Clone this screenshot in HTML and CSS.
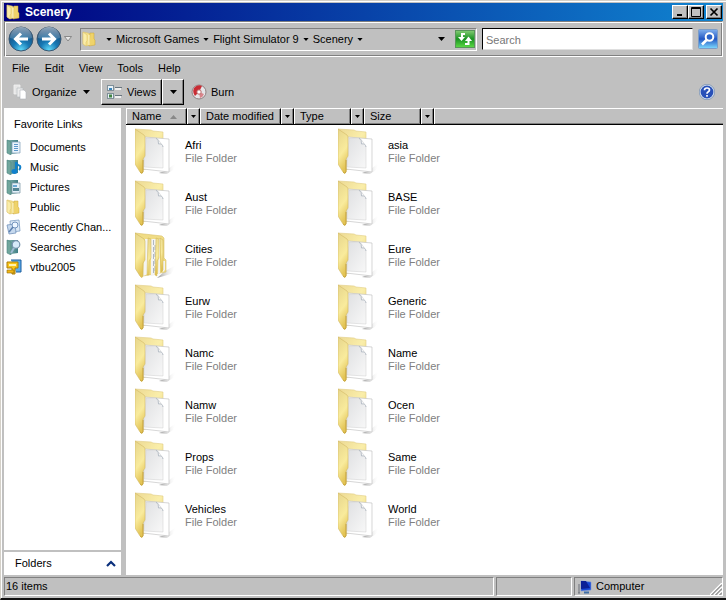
FILE: index.html
```html
<!DOCTYPE html>
<html lang="en">
<head>
    <meta charset="UTF-8">
    <meta name="viewport" content="width=device-width, initial-scale=1.0">
    <title>Scenery</title>
    <link rel="stylesheet" href="styles.css">
</head>
<body>
    <!-- shared icons -->
    <svg class="defs" aria-hidden="true">
        <defs>
            <linearGradient id="gold" x1="0" y1="0" x2="1" y2="1">
                <stop offset="0" stop-color="#ecd992"/>
                <stop offset="0.5" stop-color="#faeeaa"/>
                <stop offset="1" stop-color="#e6ca6c"/>
            </linearGradient>
            <linearGradient id="flap" x1="0" y1="0" x2="0.3" y2="1">
                <stop offset="0" stop-color="#e6d58c"/>
                <stop offset="0.6" stop-color="#f9eb9c"/>
                <stop offset="1" stop-color="#e3c455"/>
            </linearGradient>
            <linearGradient id="paper" x1="0" y1="0" x2="1" y2="1">
                <stop offset="0" stop-color="#dfe0e2"/>
                <stop offset="1" stop-color="#f8f8f8"/>
            </linearGradient>
            <linearGradient id="shade" x1="0" y1="0" x2="1" y2="0">
                <stop offset="0" stop-color="#909090"/>
                <stop offset="1" stop-color="#ffffff" stop-opacity="0"/>
            </linearGradient>
            <linearGradient id="teal" x1="0" y1="0" x2="1" y2="0">
                <stop offset="0" stop-color="#8cb8b0"/>
                <stop offset="1" stop-color="#3f7f85"/>
            </linearGradient>
            <radialGradient id="orb" cx="0.5" cy="0.95" r="0.8">
                <stop offset="0" stop-color="#5fd8f8"/>
                <stop offset="0.45" stop-color="#1779b5"/>
                <stop offset="1" stop-color="#174a78"/>
            </radialGradient>
            <linearGradient id="gloss" x1="0" y1="0" x2="0" y2="1">
                <stop offset="0" stop-color="#ffffff" stop-opacity="0.85"/>
                <stop offset="1" stop-color="#ffffff" stop-opacity="0.2"/>
            </linearGradient>
            <linearGradient id="blue" x1="0" y1="0" x2="0" y2="1">
                <stop offset="0" stop-color="#7fb0ee"/>
                <stop offset="0.5" stop-color="#2357c4"/>
                <stop offset="1" stop-color="#7fdcff"/>
            </linearGradient>
            <linearGradient id="green" x1="0" y1="0" x2="0" y2="1">
                <stop offset="0" stop-color="#85cc75"/>
                <stop offset="0.5" stop-color="#199322"/>
                <stop offset="1" stop-color="#5ddb45"/>
            </linearGradient>
        </defs>
        <symbol id="folder" viewBox="0 0 42 50">
            <path d="M30 44 L41 36 L38 43 L32 47 L24 46Z" fill="url(#shade)"/>
            <path d="M0 2 L16 3 L18 4 L28 5 V36 L8 43Z" fill="url(#gold)" stroke="#e0cd84" stroke-width="0.6"/>
            <path d="M10 10 L34 12 V45 L8 42Z" fill="#fff" stroke="#c4c4c4" stroke-width="0.7"/>
            <path d="M11 11 L22 11 L28 19 V41 L9 40Z" fill="url(#paper)" stroke="#cfcfcf" stroke-width="0.5"/>
            <path d="M21 11 Q24 13 23.500 17 Q27 16 28 20" fill="#fff" stroke="#a9b2bd" stroke-width="0.8"/>
            <path d="M0 2 L9 8 Q10 9 10 11 V29 L8 32 V45 Q7 48 5 45 L0 37Z" fill="url(#flap)" stroke="#d3bb66" stroke-width="0.6"/>
            <path d="M8 33 V45 Q7 47 5 45" fill="none" stroke="#c19d31" stroke-width="0.8"/>
        </symbol>
        <symbol id="folder-full" viewBox="0 0 42 50">
            <path d="M30 40 L41 34 L36 43 L22 47Z" fill="url(#shade)"/>
            <path d="M0 2 L27 5 L29 7 V27 L31 29 V41 L8 45Z" fill="#f0dc85" stroke="#d9c16c" stroke-width="0.6"/>
            <path d="M10 8 L13 8 V43 L8 45Z M16 8 L21 8 V44 L16 45Z M24 8 L25 8 V42 L23 44Z M28 30 L30 30 V39 L28 41Z" fill="#f4f4f2"/>
            <path d="M18.500 9 V42 M20 14 V42" stroke="#a7b0bd" stroke-width="0.9" stroke-dasharray="5 2"/>
            <path d="M13 7 L16 8 V27 L14 30 V44 L12 44Z M21 7 L24 8 V27 L22 30 V45 L20 44Z M25 7 L28 9 V39 L26 41Z" fill="url(#flap)" stroke="#cdb253" stroke-width="0.5"/>
            <path d="M0 2 L9 8 L10 10 V29 L8 32 V45 Q7 48 5 45 L0 37Z" fill="url(#flap)" stroke="#cfb55a" stroke-width="0.6"/>
        </symbol>
        <symbol id="folder-small" viewBox="0 0 16 16">
            <path d="M1 1 L6 2 L8 3 V14 L4 15 L1 13Z" fill="#f3df88" stroke="#d8bf66" stroke-width="0.5"/>
            <path d="M8 2 L12 2 V8 L13 9 V14 L7 15Z" fill="#efd36a" stroke="#cba73b" stroke-width="0.5"/>
            <path d="M1 1 L5 4 V10 L4 11 V15 L1 13Z" fill="#faeda8" stroke="#d8bf66" stroke-width="0.5"/>
            <path d="M7 4 V14" stroke="#fff8d0" stroke-width="1"/>
        </symbol>
        <symbol id="book" viewBox="0 0 16 16">
            <path d="M1 1 L12 1 V14 L5 15Z" fill="url(#teal)"/>
            <path d="M1 1 L5 3 V16 L1 14Z" fill="#70a69c" stroke="#4b8580" stroke-width="0.6"/>
        </symbol>
        <symbol id="documents" viewBox="0 0 16 16">
            <use href="#book"/>
            <path d="M6 3 H14 V14 H6Z" fill="#eaf4fc" stroke="#7c9bb5" stroke-width="0.7"/>
            <path d="M8 5.500 H12 M8 7.500 H12 M8 9.500 H12 M8 11.500 H12" stroke="#4d8dc4" stroke-width="0.9"/>
        </symbol>
        <symbol id="music" viewBox="0 0 16 16">
            <use href="#book"/>
            <path d="M10 13 V3 Q11 6 14 7 Q15 9 13 11" fill="none" stroke="#1180cc" stroke-width="2"/>
            <ellipse cx="8.5" cy="12.5" rx="3" ry="2.4" fill="#1180cc"/>
        </symbol>
        <symbol id="pictures" viewBox="0 0 16 16">
            <use href="#book"/>
            <path d="M6 4 H14 V14 H6Z" fill="#e4f1fa" stroke="#738f9f" stroke-width="0.7"/>
            <path d="M7 6 H11 V8 H7Z" fill="#6aa9d5"/>
            <path d="M7 9 H13 V12 H7Z" fill="#538594"/>
        </symbol>
        <symbol id="recent" viewBox="0 0 16 16">
            <path d="M4 2 L13 1 L14 12 L5 13Z" fill="#dce9f6" stroke="#7f9fc4" stroke-width="0.8"/>
            <path d="M1 6 L9 5 L10 14 L3 15Z" fill="#c6d9ee" stroke="#7292ba" stroke-width="0.8"/>
            <circle cx="9" cy="6" r="3" fill="#edf6ff" stroke="#7394bd"/>
            <path d="M7 8 L3 13" stroke="#5c7fae" stroke-width="1.5"/>
        </symbol>
        <symbol id="searches" viewBox="0 0 16 16">
            <use href="#book"/>
            <circle cx="10" cy="5.5" r="3.8" fill="#d6eaf9" stroke="#7491aa" stroke-width="1.2"/>
            <path d="M8 9 L5 14" stroke="#9dbbd3" stroke-width="2"/>
        </symbol>
        <symbol id="zip" viewBox="0 0 16 16">
            <path d="M5 1 H15 V13 H10" fill="#5aaef0" stroke="#1c5c9c"/>
            <path d="M1 3 H12 V9 H9 V15 H6 V9 H1Z" fill="#f8c61b" stroke="#ad7d08"/>
            <path d="M3 5 H10 V7 H3Z" fill="#fff3b0"/>
            <path d="M1 11 H8 V14 H1Z" fill="#f2b713" stroke="#8c6a10" stroke-width="0.6"/>
        </symbol>
        <symbol id="arrow" viewBox="0 0 7 4">
            <path d="M0 0 H7 L3.500 4Z" fill="currentColor"/>
        </symbol>
    </svg>

    <div class="window">
        <header class="title-bar">
            <svg class="icon"><use href="#folder-small"/></svg>
            <h1>Scenery</h1>
            <button class="win-btn" aria-label="Minimize"><svg viewBox="0 0 10 10"><path d="M2 8 H7" stroke="#000" stroke-width="2"/></svg></button>
            <button class="win-btn" aria-label="Maximize"><svg viewBox="0 0 10 10"><path d="M0.500 0.500 H9.500 V9.500 H0.500Z M0 1.500 H10" fill="none" stroke="#000"/></svg></button>
            <button class="win-btn close" aria-label="Close"><svg viewBox="0 0 10 10"><path d="M1.500 1.500 L8.500 8.500 M8.500 1.500 L1.500 8.500" stroke="#000" stroke-width="1.7"/></svg></button>
        </header>

        <nav class="nav-bar">
            <div class="travel">
                <button class="orb" aria-label="Back"><svg viewBox="0 0 26 26"><circle cx="13" cy="13" r="12" fill="url(#orb)" stroke="#3b5872"/><path d="M2 12 A11 11 0 0 1 24 12 Q13 16 2 12Z" fill="url(#gloss)" opacity="0.6"/><path d="M20 13 H8 M13 7.500 L7.500 13 L13 18.500" fill="none" stroke="#fff" stroke-width="3"/></svg></button>
                <button class="orb" aria-label="Forward"><svg viewBox="0 0 26 26"><circle cx="13" cy="13" r="12" fill="url(#orb)" stroke="#3b5872"/><path d="M2 12 A11 11 0 0 1 24 12 Q13 16 2 12Z" fill="url(#gloss)" opacity="0.6"/><path d="M6 13 H18 M13 7.500 L18.500 13 L13 18.500" fill="none" stroke="#fff" stroke-width="3"/></svg></button>
                <button class="recent-pages" aria-label="Recent pages"><svg viewBox="0 0 8 6"><path d="M0.500 0.500 H7.500 L4 5Z" fill="#e8e8e8" stroke="#777" stroke-width="0.8"/></svg></button>
            </div>
            <div class="address">
                <svg class="icon"><use href="#folder-small"/></svg>
                <button class="crumb-arrow" aria-label="Show folders"><svg class="arrow"><use href="#arrow"/></svg></button>
                <a href="#">Microsoft Games</a>
                <button class="crumb-arrow" aria-label="Show folders"><svg class="arrow"><use href="#arrow"/></svg></button>
                <a href="#">Flight Simulator 9</a>
                <button class="crumb-arrow" aria-label="Show folders"><svg class="arrow"><use href="#arrow"/></svg></button>
                <a href="#">Scenery</a>
                <button class="crumb-arrow" aria-label="Show folders"><svg class="arrow"><use href="#arrow"/></svg></button>
                <button class="crumb-arrow history" aria-label="Previous locations"><svg class="arrow"><use href="#arrow"/></svg></button>
                <button class="refresh" aria-label="Refresh"><svg viewBox="0 0 20 18"><rect x="0.5" y="0.5" width="19" height="17" fill="url(#green)" stroke="#58955a"/><path d="M10 4 H7 V8" fill="none" stroke="#fff" stroke-width="2"/><path d="M3 7 H10 L6.500 11Z" fill="#fff"/><path d="M10 14 H13.500 V10" fill="none" stroke="#fff" stroke-width="2"/><path d="M10 11 H17 L13.500 6.500Z" fill="#fff"/></svg></button>
            </div>
            <input class="search" type="text" placeholder="Search" aria-label="Search">
            <button class="search-btn" aria-label="Go"><svg viewBox="0 0 20 20"><rect x="0.5" y="0.5" width="19" height="19" rx="1" fill="url(#blue)" stroke="#7c9dc7"/><circle cx="11.5" cy="8" r="3.8" fill="#2b63c8" stroke="#fff" stroke-width="2"/><path d="M8.500 11 L4 15.500" stroke="#fff" stroke-width="2.6"/></svg></button>
        </nav>

        <div class="menu-bar">
            <button>File</button>
            <button>Edit</button>
            <button>View</button>
            <button>Tools</button>
            <button>Help</button>
        </div>

        <div class="tool-bar">
            <button class="tool organize">
                <svg class="icon" viewBox="0 0 16 16"><path d="M2 1 H8 V10 H2Z" fill="#e6e6e6" stroke="#f4f4f4" stroke-width="0.8"/><path d="M5 4 H11 V13 H5Z" fill="#ececec" stroke="#b4b8bc" stroke-width="0.6"/><path d="M8 6 H12 L14 8 V15 H8Z" fill="#fff" stroke="#b0b4b8" stroke-width="0.6"/></svg>
                Organize
                <svg class="arrow"><use href="#arrow"/></svg>
            </button>
            <div class="split">
                <button class="views">
                    <svg class="icon" viewBox="0 0 16 16"><rect x="0.5" y="1.5" width="6" height="5" fill="#e9f3f9" stroke="#7f8f98"/><rect x="0.5" y="9.5" width="6" height="5" fill="#e9f3f9" stroke="#7f8f98"/><path d="M2 5 H5" stroke="#3984bb" stroke-width="2"/><path d="M2 12 H5" stroke="#408340" stroke-width="3"/><path d="M8 3.500 H15 M8 11.500 H15" stroke="#68757f"/><path d="M8 5 H14 M8 13 H14" stroke="#fff" stroke-width="1.5"/></svg>
                    Views
                </button>
                <button class="views-arrow" aria-label="More views"><svg class="arrow"><use href="#arrow"/></svg></button>
            </div>
            <button class="tool">
                <svg class="icon" viewBox="0 0 16 16"><circle cx="8" cy="8" r="7" fill="#e5e5e8" stroke="#8f8080"/><path d="M8 8 L11 2 A7 7 0 0 0 3 4 Q1 8 4 12Z" fill="#c92c34"/><path d="M8 8 L13 10 Q12 13 9 14Z" fill="#d8848a"/><circle cx="8" cy="8" r="2.2" fill="#fff" stroke="#b66"/></svg>
                Burn
            </button>
            <button class="help" aria-label="Help contents">
                <svg class="icon" viewBox="0 0 16 16"><circle cx="8" cy="8" r="7" fill="#2850b8" stroke="#d5e0ef" stroke-width="1.2"/><circle cx="8" cy="8" r="7.7" fill="none" stroke="#6484ae" stroke-width="0.6"/><path d="M5.500 6.200 Q5.500 4 8 4 Q10.500 4 10.500 6 Q10.500 7 9 8 Q8 8.600 8 9.700 M8 11 V12.700" fill="none" stroke="#fff" stroke-width="1.7"/></svg>
            </button>
        </div>

        <main class="content">
            <aside class="sidebar">
                <h2>Favorite Links</h2>
                <ul class="links">
                    <li><a href="#"><svg class="icon"><use href="#documents"/></svg>Documents</a></li>
                    <li><a href="#"><svg class="icon"><use href="#music"/></svg>Music</a></li>
                    <li><a href="#"><svg class="icon"><use href="#pictures"/></svg>Pictures</a></li>
                    <li><a href="#"><svg class="icon"><use href="#folder-small"/></svg>Public</a></li>
                    <li><a href="#"><svg class="icon"><use href="#recent"/></svg>Recently Chan...</a></li>
                    <li><a href="#"><svg class="icon"><use href="#searches"/></svg>Searches</a></li>
                    <li><a href="#"><svg class="icon"><use href="#zip"/></svg>vtbu2005</a></li>
                </ul>
                <button class="folders-toggle">
                    Folders
                    <svg viewBox="0 0 10 7"><path d="M1 6 L5 2 L9 6" fill="none" stroke="#0a2f7c" stroke-width="2.2"/></svg>
                </button>
            </aside>

            <section class="files">
                <div class="columns">
                    <button class="col name">Name <svg class="arrow sort"><use href="#arrow"/></svg></button>
                    <button class="col-arrow" aria-label="Filter by name"><svg class="arrow"><use href="#arrow"/></svg></button>
                    <button class="col date">Date modified</button>
                    <button class="col-arrow" aria-label="Filter by date"><svg class="arrow"><use href="#arrow"/></svg></button>
                    <button class="col type">Type</button>
                    <button class="col-arrow" aria-label="Filter by type"><svg class="arrow"><use href="#arrow"/></svg></button>
                    <button class="col size">Size</button>
                    <button class="col-arrow" aria-label="Filter by size"><svg class="arrow"><use href="#arrow"/></svg></button>
                    <div class="col-rest"></div>
                </div>
                <ul class="tiles" id="tiles"></ul>
            </section>
        </main>

        <footer class="status-bar">
            <div class="pane count">16 items</div>
            <div class="pane empty"></div>
            <div class="pane zone">
                <svg class="icon" viewBox="0 0 16 16"><path d="M4 2 L14 3 V11 L4 12Z" fill="#1747d5" stroke="#7899d8" stroke-width="0.6"/><path d="M4 2 L9 2 L13 9 L4 10Z" fill="#0b1f96"/><path d="M2 5 V14 M1 14 H3" stroke="#6b6f78"/><path d="M7 13.500 H12" stroke="#3f6da5" stroke-width="2"/></svg>
                Computer
                <svg class="grip" viewBox="0 0 12 12"><path d="M0 12 L12 0 M4 12 L12 4 M8 12 L12 8" stroke="#fff" stroke-width="1.5"/><path d="M1.500 12 L12 1.500 M5.500 12 L12 5.500 M9.500 12 L12 9.500" stroke="#777"/></svg>
            </div>
        </footer>
    </div>

    <script>
        const folders = [
            'Afri', 'asia', 'Aust', 'BASE', 'Cities', 'Eure', 'Eurw', 'Generic',
            'Namc', 'Name', 'Namw', 'Ocen', 'Props', 'Same', 'Vehicles', 'World'
        ];

        function displayFolders() {
            const tiles = document.getElementById('tiles');
            folders.forEach((name) => {
                const icon = name === 'Cities' ? 'folder-full' : 'folder';
                const li = document.createElement('li');
                li.innerHTML = `
                    <a href="#">
                        <svg><use href="#${icon}"/></svg>
                        <span class="label">${name}<small>File Folder</small></span>
                    </a>
                `;
                tiles.appendChild(li);
            });
        }

        displayFolders();
    </script>
</body>
</html>
```

FILE: styles.css
```css
* {
    box-sizing: border-box;
}
body {
    margin: 0;
    font-family: "Liberation Sans", Arial, sans-serif;
    font-size: 11px;
    line-height: 13px;
    color: #000;
    background-color: #c0c0c0;
}
button, input {
    font: inherit;
    color: inherit;
}
button {
    display: flex;
    align-items: center;
    padding: 0;
    border: none;
    background: none;
    white-space: nowrap;
}
a {
    color: inherit;
    text-decoration: none;
}
ul {
    list-style: none;
    margin: 0;
    padding: 0;
}
svg {
    display: block;
    flex: none;
}
.defs {
    position: absolute;
    width: 0;
    height: 0;
}
.icon {
    width: 16px;
    height: 16px;
}
.arrow {
    width: 7px;
    height: 4px;
}
.window {
    display: flex;
    flex-direction: column;
    min-height: 100vh;
    padding: 2px 3px 2px 2px;
    border-top: 1px solid #d4d0c8;
    border-left: 1px solid #d4d0c8;
    border-bottom: 2px solid #101010;
    box-shadow: inset 1px 1px 0 #fff;
}

/* title bar */
.title-bar {
    display: flex;
    align-items: center;
    height: 18px;
    margin-left: 1px;
    padding: 0 1px 0 2px;
    background: linear-gradient(to right, #000080, #1084d0);
}
.title-bar h1 {
    flex: 1;
    margin: 0 0 0 3px;
    font-size: 12px;
    line-height: 16px;
    color: #fff;
}
.win-btn {
    justify-content: center;
    width: 16px;
    height: 14px;
    background-color: #c0c0c0;
    border: 1px solid;
    border-color: #fff #000 #000 #fff;
    box-shadow: inset -1px -1px 0 #808080;
}
.win-btn svg {
    width: 10px;
    height: 10px;
}
.close {
    margin-left: 2px;
}

/* navigation */
.nav-bar {
    display: flex;
    align-items: center;
    height: 36px;
    margin-left: 1px;
    padding: 0 4px 0 3px;
    border: 1px solid #808080;
    border-right-color: #fff;
    border-bottom-color: #fff;
    box-shadow: inset 1px 1px 0 #fff, inset -1px -1px 0 #808080;
}
.travel {
    display: flex;
    align-items: center;
    width: 72px;
}
.orb {
    width: 28px;
}
.orb svg {
    width: 26px;
    height: 26px;
}
.recent-pages svg {
    width: 8px;
    height: 6px;
}
.address {
    display: flex;
    flex: 1;
    align-items: center;
    height: 23px;
    padding: 0 1px;
    border: 1px solid #808080;
    border-right-color: #fff;
    border-bottom-color: #fff;
    white-space: nowrap;
}
.address .icon {
    margin-right: 4px;
}
.crumb-arrow {
    justify-content: center;
    width: 14px;
    height: 17px;
}
.crumb-arrow .arrow {
    width: 6px;
    height: 3px;
}
.history {
    margin-left: auto;
}
.history .arrow {
    width: 7px;
    height: 4px;
}
.refresh {
    margin-left: 7px;
}
.refresh svg {
    width: 20px;
    height: 18px;
}
.search {
    flex: 0 1 211px;
    min-width: 80px;
    height: 22px;
    margin: 0 5px;
    padding: 3px 3px 1px;
    background-color: #fff;
    border: 1px solid #000;
    border-right-color: #dfdfdf;
    border-bottom-color: #dfdfdf;
    border-radius: 0;
}
.search::placeholder {
    color: #777;
    opacity: 1;
}
.search-btn svg {
    width: 20px;
    height: 20px;
}

/* menu and tool bars */
.menu-bar {
    display: flex;
    gap: 15px;
    height: 21px;
    padding: 2px 0 0 9px;
}
.tool-bar {
    display: flex;
    align-items: center;
    height: 30px;
    padding: 0 8px 2px 9px;
}
.tool {
    gap: 4px;
}
.organize {
    width: 89px;
}
.organize .arrow {
    margin-left: 2px;
}
.split {
    display: flex;
    height: 26px;
    margin-right: 7px;
}
.views, .views-arrow {
    border: 1px solid;
    border-color: #fff #000 #000 #fff;
    box-shadow: inset -1px -1px 0 #808080;
}
.views {
    gap: 4px;
    width: 61px;
    padding-left: 5px;
}
.views-arrow {
    justify-content: center;
    width: 22px;
}
.help {
    margin-left: auto;
}

/* content */
.content {
    display: flex;
    flex: 1;
    gap: 5px;
    margin-left: 1px;
}
.sidebar {
    display: flex;
    flex-direction: column;
    flex: none;
    width: 117px;
    background-color: #fff;
}
.sidebar h2 {
    margin: 0;
    padding: 10px 10px 6px;
    font-size: 11px;
    font-weight: normal;
}
.links {
    flex: 1;
}
.links a {
    display: flex;
    align-items: center;
    gap: 8px;
    height: 20px;
    padding-left: 2px;
    white-space: nowrap;
}
.folders-toggle {
    justify-content: space-between;
    height: 25px;
    padding: 0 5px 0 11px;
    border-top: 2px solid #c0c0c0;
}
.folders-toggle svg {
    width: 10px;
    height: 7px;
}
.files {
    flex: 1;
    min-width: 0;
    background-color: #fff;
}
.columns {
    display: flex;
    height: 17px;
    background-color: #c0c0c0;
    border-bottom: 1px solid #000;
}
.col, .col-arrow {
    border-top: 1px solid #fff;
    border-left: 1px solid #fff;
    border-right: 1px solid #000;
    box-shadow: inset -1px -1px 0 #808080;
}
.col {
    gap: 9px;
    padding-left: 5px;
}
.col-arrow {
    justify-content: center;
    width: 13px;
}
.col-arrow .arrow {
    width: 5px;
    height: 3px;
}
.name {
    width: 61px;
}
.date {
    width: 81px;
}
.type, .size {
    width: 57px;
}
.col-rest {
    flex: 1;
    border-top: 1px solid #fff;
    border-left: 1px solid #fff;
    box-shadow: inset 0 -1px 0 #808080;
}
.sort {
    color: #888;
    transform: rotate(180deg);
}
.tiles {
    display: grid;
    grid-template-columns: repeat(auto-fill, 203px);
    grid-auto-rows: 52px;
    padding: 2px 0 0 9px;
}
.tiles a {
    display: flex;
    gap: 8px;
}
.tiles svg {
    width: 42px;
    height: 50px;
}
.label {
    padding-top: 12px;
}
.label small {
    display: block;
    font-size: 11px;
    color: #808080;
}

/* status bar */
.status-bar {
    display: flex;
    gap: 2px;
    height: 21px;
    margin-left: 1px;
    padding-top: 2px;
}
.pane {
    display: flex;
    align-items: center;
    border: 1px solid #808080;
    border-right-color: #fff;
    border-bottom-color: #fff;
}
.count {
    flex: 1;
    padding-left: 1px;
}
.empty {
    width: 76px;
}
.zone {
    gap: 3px;
    width: 149px;
    padding-left: 2px;
}
.grip {
    align-self: flex-end;
    width: 12px;
    height: 12px;
    margin-left: auto;
}
```
